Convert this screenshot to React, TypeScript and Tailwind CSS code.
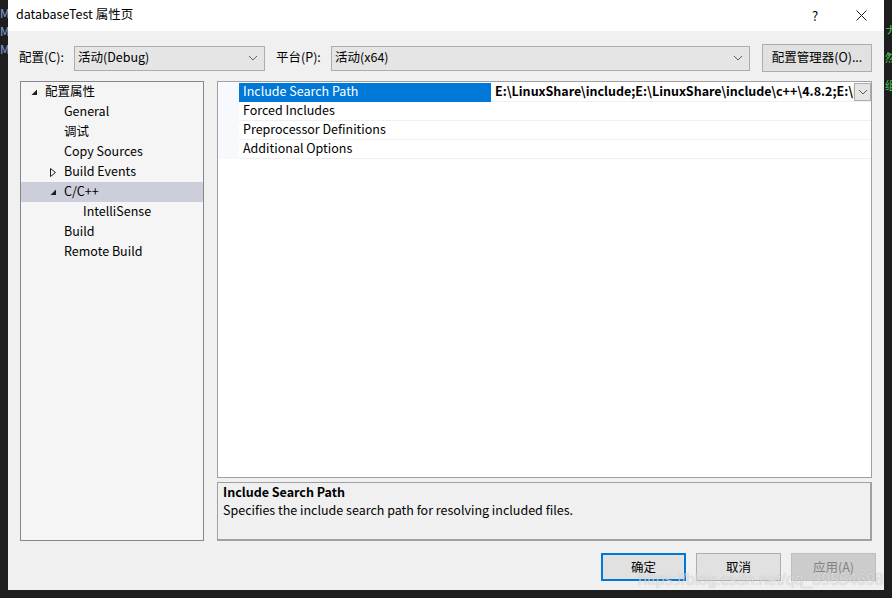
import React from "react";

const FONT = { fontFamily: '"Noto Sans CJK SC", "Noto Sans", sans-serif' };

type TreeItem = { label: string; indent: number; arrow?: "open" | "closed"; selected?: boolean };

const TREE: TreeItem[] = [
  { label: "配置属性", indent: 0, arrow: "open" },
  { label: "General", indent: 1 },
  { label: "调试", indent: 1 },
  { label: "Copy Sources", indent: 1 },
  { label: "Build Events", indent: 1, arrow: "closed" },
  { label: "C/C++", indent: 1, arrow: "open", selected: true },
  { label: "IntelliSense", indent: 2 },
  { label: "Build", indent: 1 },
  { label: "Remote Build", indent: 1 },
];

const PROPS = ["Include Search Path", "Forced Includes", "Preprocessor Definitions", "Additional Options"];

function Chevron({ className = "" }: { className?: string }) {
  return (
    <svg width="10" height="6" viewBox="0 0 10 6" className={className}>
      <path d="M1 1 L5 5 L9 1" fill="none" stroke="#606060" strokeWidth="1" />
    </svg>
  );
}

function Arrow({ kind }: { kind: "open" | "closed" }) {
  if (kind === "open") {
    return (
      <svg width="7" height="7" viewBox="0 0 7 7">
        <polygon points="6,0.5 6,6 0.5,6" fill="#1e1e1e" />
      </svg>
    );
  }
  return (
    <svg width="6" height="9" viewBox="0 0 6 9">
      <polygon points="0.5,0.5 5.5,4.5 0.5,8.5" fill="none" stroke="#1e1e1e" strokeWidth="1" />
    </svg>
  );
}

function Select({ value, width }: { value: string; width: string }) {
  return (
    <div className={`flex h-[25px] shrink-0 items-center justify-between border border-[#adadad] bg-[#e5e5e5] pl-[3px] pr-[6px] ${width}`}>
      <span className="-translate-y-px">{value}</span>
      <Chevron />
    </div>
  );
}

export default function App() {
  return (
    <div className="relative h-[598px] w-[892px] overflow-hidden bg-[#1e1e1e] text-[12.5px] text-black" style={FONT}>
      {/* editor behind the dialog */}
      <div className="absolute left-0 top-[4px] flex flex-col text-[12px] leading-[18px] text-[#8aa0c8]">
        <span>M</span>
        <span>M</span>
        <span>M</span>
      </div>
      <div className="absolute left-[885px] top-[22px] flex flex-col gap-[14px] text-[11px] leading-[14px] text-[#4ec94e]">
        <span>ナ</span>
        <span>然</span>
        <span>组</span>
      </div>

      <div className="absolute left-[8px] top-0 flex h-[590px] w-[876px] flex-col bg-[#f0f0f0]">
        {/* title bar */}
        <div className="flex h-[31px] shrink-0 items-center justify-between bg-white pl-[8px]">
          <span className="-translate-y-px">databaseTest 属性页</span>
          <div className="flex items-center">
            <span className="w-[46px] text-center text-[13px]">?</span>
            <div className="flex w-[46px] justify-center">
              <svg width="11" height="11" viewBox="0 0 11 11">
                <path d="M0.5 0.5 L10.5 10.5 M10.5 0.5 L0.5 10.5" stroke="#1e1e1e" strokeWidth="1" />
              </svg>
            </div>
          </div>
        </div>

        {/* config row */}
        <div className="mt-[13px] flex items-center pl-[11px] pr-[12px]">
          <span className="w-[55px] shrink-0 -translate-y-px">配置(C):</span>
          <Select value="活动(Debug)" width="w-[191px]" />
          <span className="ml-[11px] w-[55px] shrink-0 -translate-y-px">平台(P):</span>
          <Select value="活动(x64)" width="w-[419px]" />
          <div className="ml-[12px] flex h-[28px] w-[110px] shrink-0 items-center justify-center border border-[#adadad] bg-[#e1e1e1]">
            <span className="-translate-y-px">配置管理器(O)...</span>
          </div>
        </div>

        {/* main panels */}
        <div className="mt-[9px] flex h-[460px] gap-[13px] px-[12px]">
          <div className="flex w-[184px] shrink-0 flex-col border border-[#828790] bg-[#f5f5f5]">
            {TREE.map((t) => (
              <div
                key={t.label}
                className={`flex h-[20px] items-center ${t.selected ? "bg-[#cccedb]" : ""}`}
                style={{ paddingLeft: 10 + t.indent * 19 }}
              >
                <span className="flex w-[14px] shrink-0 items-center">{t.arrow && <Arrow kind={t.arrow} />}</span>
                <span className="-translate-y-px whitespace-nowrap">{t.label}</span>
              </div>
            ))}
          </div>

          <div className="flex min-w-0 flex-1 flex-col gap-[4px]">
            <div className="flex h-[397px] flex-col border border-[#a0a0a0] bg-white pt-[1px]">
              {PROPS.map((p, i) => (
                <div key={p} className="flex h-[19px]">
                  <div className="w-[21px] shrink-0 bg-[#f7f9fc]" />
                  <div
                    className={`flex w-[252px] shrink-0 items-center border-b pl-[4px] ${
                      i === 0 ? "border-[#0078d7] bg-[#0078d7] text-white" : "border-[#f0f0f0]"
                    }`}
                  >
                    <span className="-translate-y-px">{p}</span>
                  </div>
                  <div className="flex min-w-0 flex-1 items-center border-b border-[#f0f0f0]">
                    {i === 0 && (
                      <>
                        <span className="min-w-0 flex-1 -translate-y-px overflow-hidden whitespace-nowrap pl-[4px] font-bold">
                          E:\LinuxShare\include;E:\LinuxShare\include\c++\4.8.2;E:\LinuxShare\include\c++\4.8.2\x86_64-redhat-linux
                        </span>
                        <div className="flex h-[18px] w-[17px] shrink-0 items-center justify-center border border-[#adadad] bg-[#e5e5e5]">
                          <Chevron />
                        </div>
                      </>
                    )}
                  </div>
                </div>
              ))}
            </div>

            <div className="flex h-[59px] flex-col border border-b-2 border-r-2 border-[#a0a0a0] bg-[#f0f0f0] pl-[5px]">
              <span className="font-bold leading-[18px]">Include Search Path</span>
              <span className="leading-[18px]">Specifies the include search path for resolving included files.</span>
            </div>
          </div>
        </div>

        {/* buttons */}
        <div className="mt-[12px] flex justify-end gap-[10px] pr-[8px]">
          <div className="flex h-[28px] w-[85px] items-center justify-center border-2 border-[#0078d7] bg-[#e1e1e1]">确定</div>
          <div className="flex h-[28px] w-[85px] items-center justify-center border border-[#adadad] bg-[#e1e1e1]">取消</div>
          <div className="flex h-[28px] w-[85px] items-center justify-center border border-[#bfbfbf] bg-[#cccccc] text-[#838383]">
            应用(A)
          </div>
        </div>
      </div>

      {/* watermark */}
      <div
        className="absolute left-[638px] top-[568px] text-[16px] text-white/60"
        style={{ fontFamily: '"Liberation Sans", Arial, sans-serif', textShadow: "0 0 1px rgba(0,0,0,0.25)" }}
      >
        https://blog.csdn.net/qq_39554698
      </div>
    </div>
  );
}
